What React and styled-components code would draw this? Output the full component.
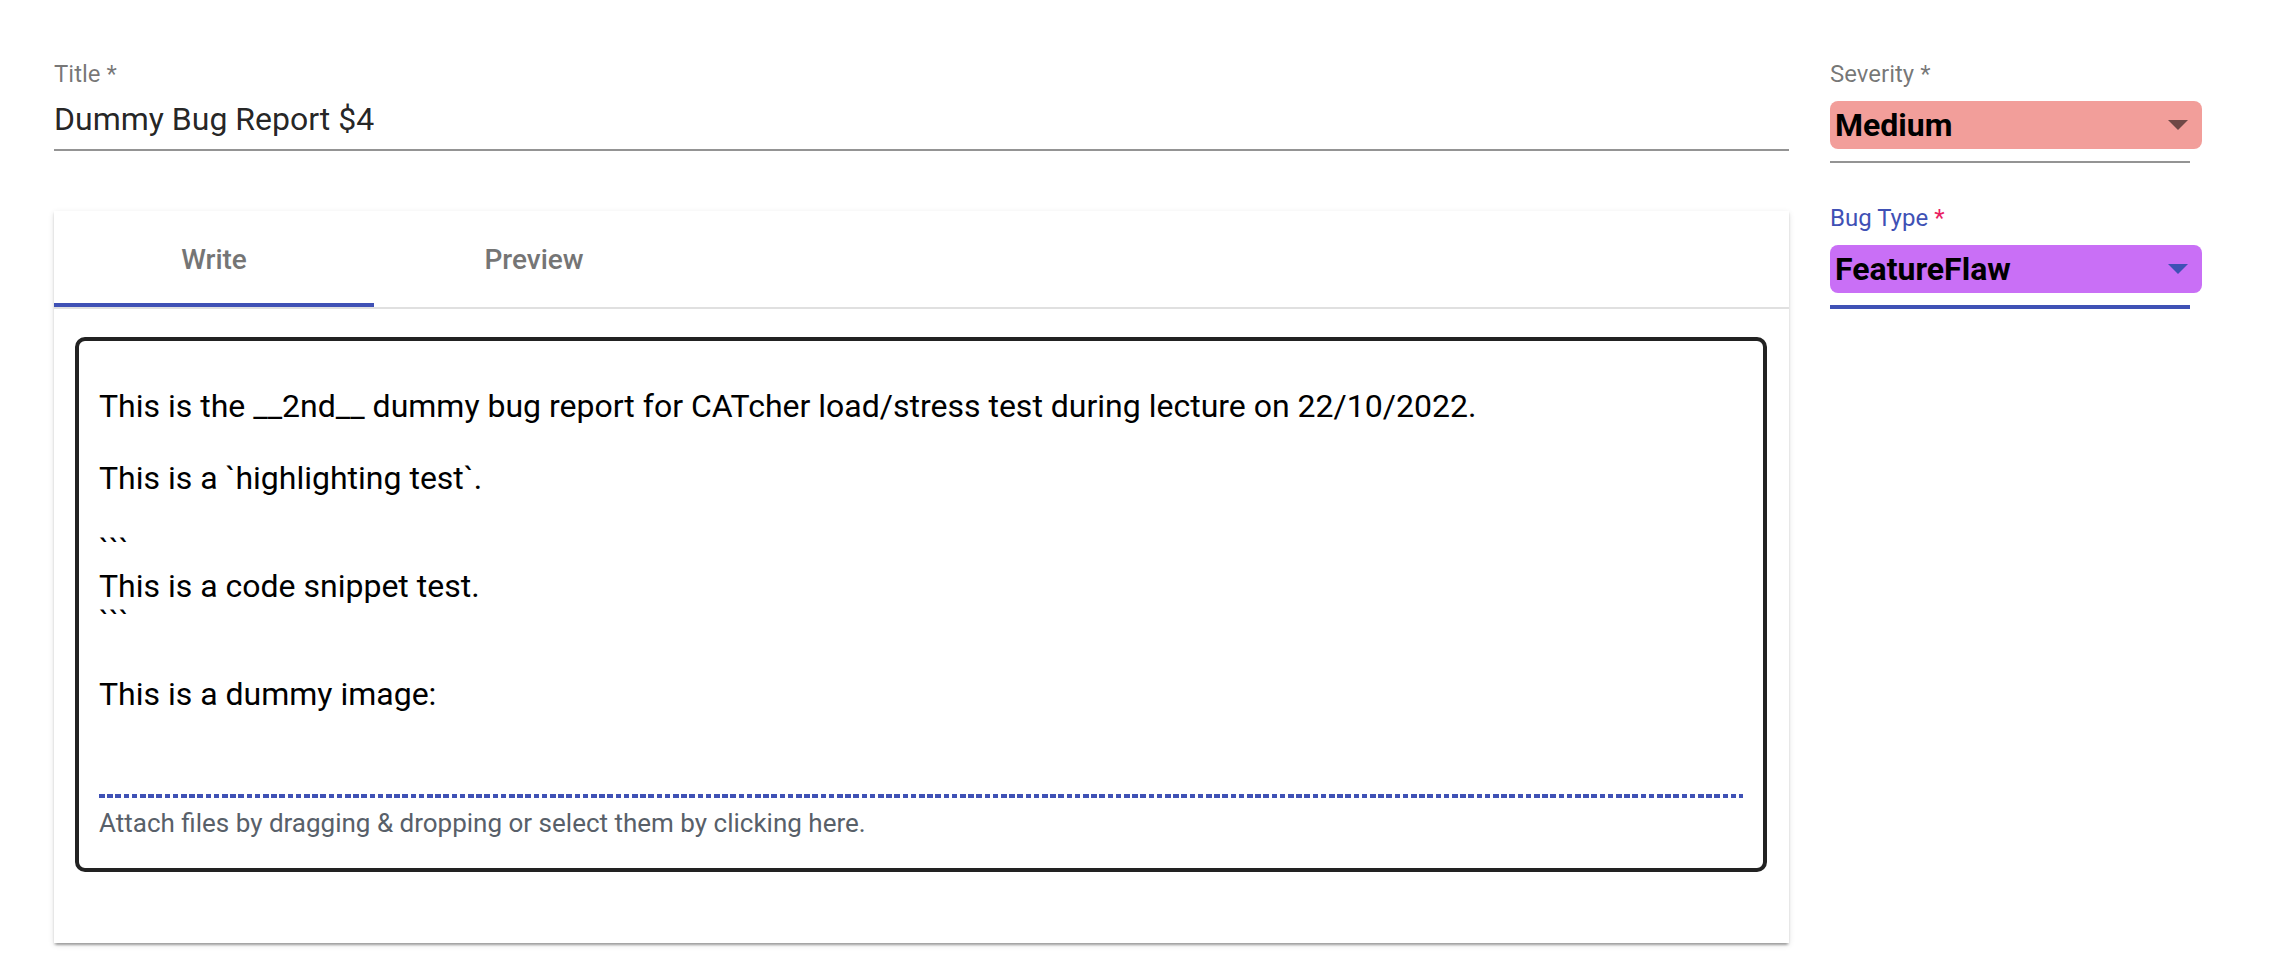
import styled, { createGlobalStyle } from 'styled-components';

const GlobalStyle = createGlobalStyle`
  html, body {
    margin: 0;
    background: #fff;
  }
  body {
    font-family: Roboto, "Helvetica Neue", sans-serif;
  }
`;

const description = `This is the __2nd__ dummy bug report for CATcher load/stress test during lecture on 22/10/2022.

This is a \`highlighting test\`.

\`\`\`
This is a code snippet test.
\`\`\`

This is a dummy image:`;

const Page = styled.div`
  display: flex;
  gap: 41px;
  padding: 60px 82px 0 54px;
  min-height: 962px;
  box-sizing: border-box;
`;

const MainColumn = styled.div`
  flex: 1;
  min-width: 0;
  display: flex;
  flex-direction: column;
`;

const SideColumn = styled.div`
  width: 360px;
  flex-shrink: 0;
  display: flex;
  flex-direction: column;
  gap: 41px;
`;

const Field = styled.div`
  display: flex;
  flex-direction: column;
`;

const FieldLabel = styled.label`
  display: block;
  font-size: 24px;
  line-height: 28px;
  color: ${({ $focused }) => ($focused ? '#3f51b5' : 'rgba(0, 0, 0, 0.54)')};
`;

const Required = styled.span`
  color: ${({ $focused }) => ($focused ? '#e91e63' : 'inherit')};
`;

const TitleValue = styled.div`
  margin-top: 11px;
  font-size: 32px;
  line-height: 40px;
  color: rgba(0, 0, 0, 0.87);
`;

const Underline = styled.div`
  margin-top: ${({ $gap }) => $gap}px;
  height: ${({ $focused }) => ($focused ? 4 : 2)}px;
  background: ${({ $focused }) => ($focused ? '#3f51b5' : '#949494')};
`;

const SelectBox = styled.div`
  margin-top: 13px;
  width: calc(100% + 12px);
  height: 48px;
  box-sizing: border-box;
  padding: 0 14px 0 5px;
  border-radius: 8px;
  background: ${({ $color }) => $color};
  display: flex;
  align-items: center;
  justify-content: space-between;
  font-size: 32px;
  line-height: 48px;
  font-weight: 700;
  color: #000;
`;

const Arrow = styled.span`
  width: 0;
  height: 0;
  border-left: 10px solid transparent;
  border-right: 10px solid transparent;
  border-top: 10px solid ${({ $focused }) => ($focused ? '#3f51b5' : 'rgba(0, 0, 0, 0.54)')};
`;

const Card = styled.div`
  margin-top: 60px;
  background: #fff;
  box-shadow: 0 4px 2px -2px rgba(0, 0, 0, 0.2), 0 2px 2px 0 rgba(0, 0, 0, 0.14),
    0 2px 6px 0 rgba(0, 0, 0, 0.12);
`;

const TabHeader = styled.div`
  display: flex;
  border-bottom: 2px solid #e0e0e0;
`;

const Tab = styled.div`
  width: 320px;
  height: 96px;
  box-sizing: border-box;
  padding-top: 4px;
  display: flex;
  align-items: center;
  justify-content: center;
  font-size: 28px;
  font-weight: 500;
  color: #757575;
  border-bottom: 4px solid ${({ $active }) => ($active ? '#3f51b5' : 'transparent')};
  cursor: pointer;
`;

const CardBody = styled.div`
  padding: 28px 22px 71px 21px;
`;

const Editor = styled.div`
  border: 4px solid #222;
  border-radius: 10px;
  padding: 0 20px;
`;

const EditorText = styled.div`
  height: 453px;
  box-sizing: border-box;
  padding-top: 47px;
  white-space: pre-wrap;
  font-size: 32px;
  line-height: 36px;
  color: #000;
`;

const DropLine = styled.div`
  height: 4px;
  background: repeating-linear-gradient(
    to right,
    #3f51b5 0,
    #3f51b5 5.6px,
    transparent 5.6px,
    transparent 8.2px
  );
`;

const DropHint = styled.div`
  margin-top: 10px;
  padding-bottom: 30px;
  font-size: 26px;
  line-height: 30px;
  color: #586069;
`;

function SelectField({ label, value, color, focused }) {
  return (
    <Field>
      <FieldLabel $focused={focused}>
        {label} <Required $focused={focused}>*</Required>
      </FieldLabel>
      <SelectBox $color={color}>
        <span>{value}</span>
        <Arrow $focused={focused} />
      </SelectBox>
      <Underline $gap={12} $focused={focused} />
    </Field>
  );
}

export default function App() {
  return (
    <>
      <GlobalStyle />
      <Page>
        <MainColumn>
          <Field>
            <FieldLabel>
              Title <Required>*</Required>
            </FieldLabel>
            <TitleValue>Dummy Bug Report $4</TitleValue>
            <Underline $gap={10} />
          </Field>
          <Card>
            <TabHeader>
              <Tab $active>Write</Tab>
              <Tab>Preview</Tab>
            </TabHeader>
            <CardBody>
              <Editor>
                <EditorText>{description}</EditorText>
                <DropLine />
                <DropHint>Attach files by dragging &amp; dropping or select them by clicking here.</DropHint>
              </Editor>
            </CardBody>
          </Card>
        </MainColumn>
        <SideColumn>
          <SelectField label="Severity" value="Medium" color="#f29e9a" />
          <SelectField label="Bug Type" value="FeatureFlaw" color="#c96ff6" focused />
        </SideColumn>
      </Page>
    </>
  );
}
